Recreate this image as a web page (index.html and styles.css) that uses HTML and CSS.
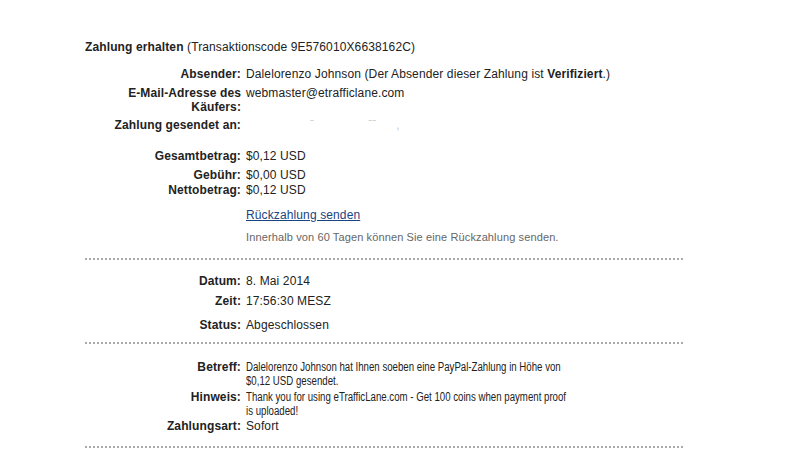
FILE: index.html
```html
<!DOCTYPE html>
<html lang="de">
<head>
    <meta charset="UTF-8">
    <meta name="viewport" content="width=device-width, initial-scale=1.0">
    <title>Zahlung erhalten</title>
    <link rel="stylesheet" href="styles.css">
</head>
<body>

<div class="details">
    <h2 class="heading"><b>Zahlung erhalten</b> (Transaktionscode 9E576010X6638162C)</h2>

    <!-- Absender -->
    <div class="row gap-top-head">
        <div class="label">Absender:</div>
        <div class="value wide">Dalelorenzo Johnson (Der Absender dieser Zahlung ist <b>Verifiziert</b>.)</div>
    </div>
    <div class="row gap-5">
        <div class="label">E-Mail-Adresse des Käufers:</div>
        <div class="value">webmaster@etrafficlane.com</div>
    </div>
    <div class="row gap-4">
        <div class="label nowrap">Zahlung gesendet an:</div>
        <div class="value hidden-mail"><span class="m1">ˉ</span><span class="m2">ˉˉ</span><span class="m3">,</span></div>
    </div>

    <!-- Betraege -->
    <div class="row gap-17">
        <div class="label">Gesamtbetrag:</div>
        <div class="value">$0,12 USD</div>
    </div>
    <div class="row gap-5">
        <div class="label">Gebühr:</div>
        <div class="value">$0,00 USD</div>
    </div>
    <div class="row gap-1">
        <div class="label">Nettobetrag:</div>
        <div class="value">$0,12 USD</div>
    </div>
    <div class="row gap-11">
        <div class="label"></div>
        <div class="value"><a href="#" class="refund">Rückzahlung senden</a></div>
    </div>
    <div class="row gap-8">
        <div class="label"></div>
        <div class="value note">Innerhalb von 60 Tagen können Sie eine Rückzahlung senden.</div>
    </div>

    <div class="divider"></div>

    <!-- Datum -->
    <div class="row gap-14">
        <div class="label">Datum:</div>
        <div class="value">8. Mai 2014</div>
    </div>
    <div class="row gap-6">
        <div class="label">Zeit:</div>
        <div class="value">17:56:30 MESZ</div>
    </div>
    <div class="row gap-10">
        <div class="label">Status:</div>
        <div class="value">Abgeschlossen</div>
    </div>

    <div class="divider div-after-status"></div>

    <!-- Betreff -->
    <div class="row gap-16">
        <div class="label">Betreff:</div>
        <div class="value"><span class="condensed">Dalelorenzo Johnson hat Ihnen soeben eine PayPal-Zahlung in Höhe von $0,12 USD gesendet.</span></div>
    </div>
    <div class="row gap-2">
        <div class="label">Hinweis:</div>
        <div class="value"><span class="condensed">Thank you for using eTrafficLane.com - Get 100 coins when payment proof is uploaded!</span></div>
    </div>
    <div class="row gap-1">
        <div class="label">Zahlungsart:</div>
        <div class="value">Sofort</div>
    </div>

    <div class="divider div-last"></div>
</div>

</body>
</html>
```

FILE: styles.css
```css
* {
    margin: 0;
    padding: 0;
    box-sizing: border-box;
}

body {
    font-family: 'Liberation Sans', Arial, sans-serif;
    font-size: 12px;
    line-height: 14px;
    letter-spacing: 0.12px;
    color: #222;
    background: #fff;
}

.details {
    width: 600px;
    margin-left: 85px;
    padding-top: 40px;
}

.heading {
    font-size: 12px;
    font-weight: normal;
    line-height: 14px;
    color: #222;
}

.row {
    display: flex;
    align-items: flex-start;
}

.label {
    width: 127px;
    margin-left: 29px;
    margin-right: 5px;
    text-align: right;
    font-weight: bold;
    color: #222;
    flex-shrink: 0;
}

.label.nowrap {
    white-space: nowrap;
}

.value {
    width: 325px;
}

.value.wide {
    width: 420px;
}

/* Betreff / Hinweis are shown narrower in the original */
.condensed {
    display: block;
    width: 404px;
    letter-spacing: 0;
    transform: scaleX(0.805);
    transform-origin: left top;
}

.hidden-mail {
    color: #ccc;
    height: 14px;
}

.hidden-mail .m1 { margin-left: 64px; }
.hidden-mail .m2 { margin-left: 54px; }
.hidden-mail .m3 { margin-left: 20px; }

.refund {
    color: #1a4480;
    text-decoration: underline;
}

.note {
    font-size: 11px;
    color: #666;
}

.divider {
    height: 2px;
    margin-top: 14px;
    background-image: repeating-linear-gradient(to right, #aaa 0, #aaa 2px, transparent 2px, transparent 4px);
}

.div-after-status { margin-top: 10px; }
.div-last { margin-top: 13px; }

.gap-top-head { margin-top: 13px; }
.gap-1 { margin-top: 1px; }
.gap-2 { margin-top: 2px; }
.gap-4 { margin-top: 4px; }
.gap-5 { margin-top: 5px; }
.gap-6 { margin-top: 6px; }
.gap-8 { margin-top: 8px; }
.gap-10 { margin-top: 10px; }
.gap-11 { margin-top: 11px; }
.gap-14 { margin-top: 14px; }
.gap-16 { margin-top: 16px; }
.gap-17 { margin-top: 17px; }
```
